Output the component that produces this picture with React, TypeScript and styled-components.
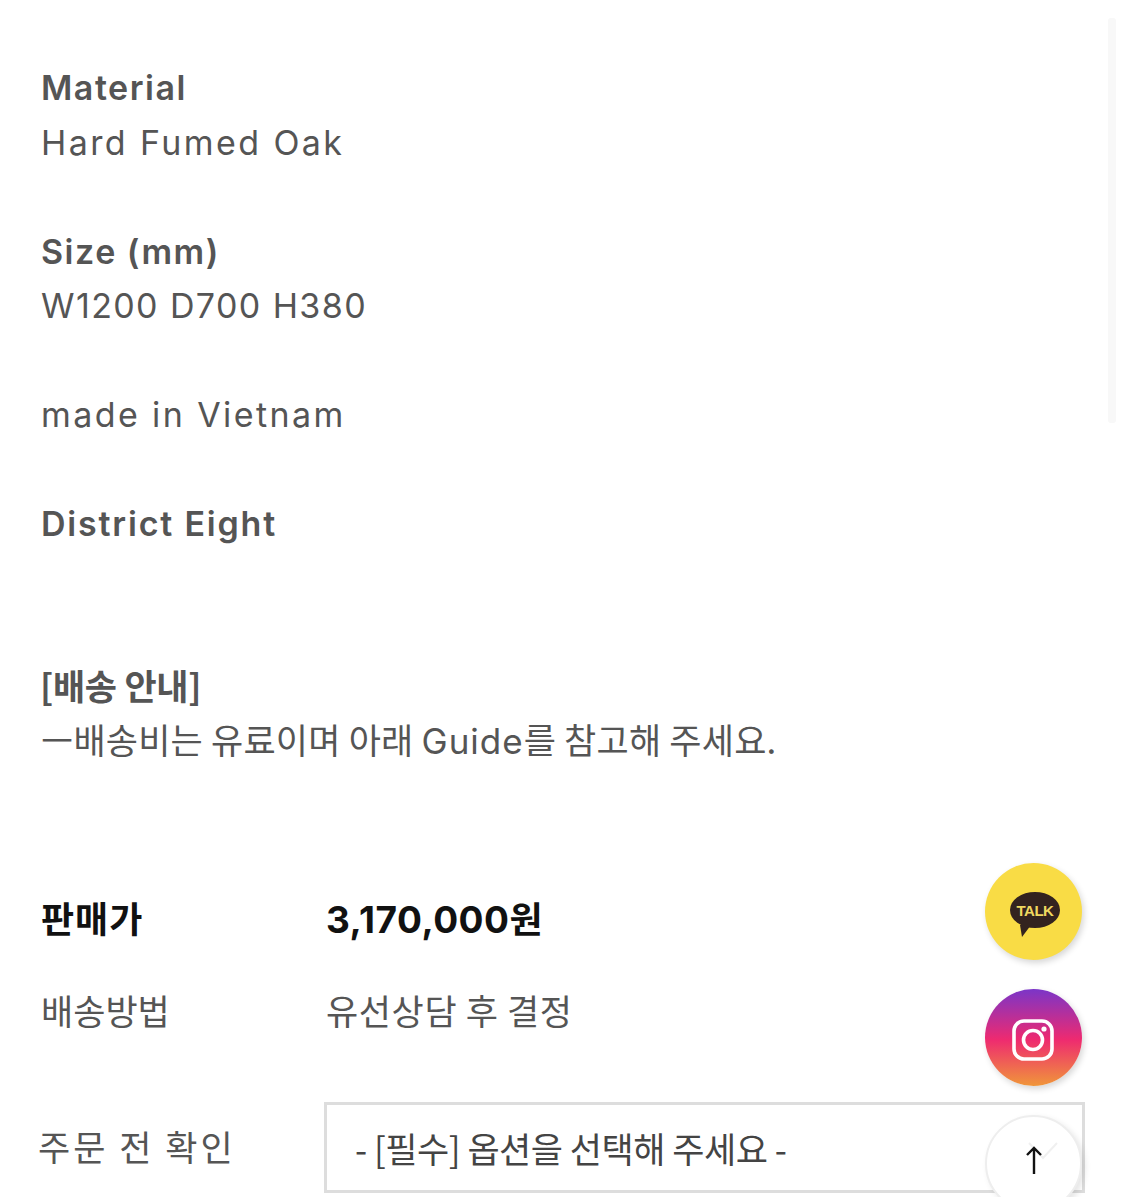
import styled, { createGlobalStyle } from "styled-components";

const Global = createGlobalStyle`
  html, body {
    margin: 0;
    padding: 0;
    background: #fff;
  }
`;

const latin = `Inter, "Noto Sans CJK KR", sans-serif`;
const korean = `"Noto Sans CJK KR", sans-serif`;

const Page = styled.div`
  position: relative;
  width: 1125px;
  height: 1197px;
  overflow: hidden;
  background: #fff;
  box-sizing: border-box;
  padding-top: 61px;
`;

const Scrollbar = styled.div`
  position: absolute;
  top: 18px;
  right: 9px;
  width: 8px;
  height: 405px;
  border-radius: 3px;
  background: #f8f8f8;
`;

const Description = styled.div`
  padding-left: 41px;
  font-family: ${latin};
  font-size: 34px;
  line-height: 54.5px;
  color: #555;
`;

const Line = styled.div<{ $bold?: boolean; $gap?: number; $track?: number }>`
  font-weight: ${(p) => (p.$bold ? 600 : 400)};
  margin-top: ${(p) => (p.$gap || 0) * 54.5}px;
  letter-spacing: ${(p) => p.$track ?? 0}px;
  white-space: nowrap;
`;

const NoticeTitle = styled(Line)`
  font-family: ${korean};
  font-weight: 700;
  font-size: 35px;
  margin-top: 106px;
  margin-left: -1px;
  letter-spacing: -0.3px;
`;

const NoticeText = styled(Line)`
  font-size: 35px;
  font-family: ${korean};
  letter-spacing: 0.2px;
  font-weight: 400;
  span {
    font-family: ${latin};
    letter-spacing: 1px;
  }
`;

const Info = styled.div`
  margin-top: 103px;
  padding-left: 41px;
  font-family: ${korean};
  color: #555;
  font-size: 35px;
`;

const Row = styled.div<{ $height: number }>`
  display: grid;
  grid-template-columns: 285px 1fr;
  align-items: center;
  height: ${(p) => p.$height}px;
  white-space: nowrap;
`;

const Label = styled.div<{ $strong?: boolean; $shift?: number; $track?: number; $lift?: number }>`
  margin-left: ${(p) => p.$shift || 0}px;
  margin-bottom: ${(p) => p.$lift || 0}px;
  font-weight: ${(p) => (p.$strong ? 700 : 400)};
  font-size: ${(p) => (p.$strong ? 36 : 35)}px;
  color: ${(p) => (p.$strong ? "#111" : "#555")};
  letter-spacing: ${(p) => p.$track ?? 0}px;
`;

const Value = styled.div`
  letter-spacing: 0.6px;
`;

const Price = styled.div`
  font-family: ${latin};
  font-weight: 700;
  color: #111;
  font-size: 37px;
  letter-spacing: 0.5px;
  span {
    font-family: ${korean};
    font-size: 36px;
  }
`;

const Select = styled.div`
  box-sizing: border-box;
  margin-left: -2px;
  width: 761px;
  height: 91px;
  border: 3px solid #ddd;
  display: flex;
  align-items: center;
  padding-left: 28px;
  font-size: 35px;
  color: #444;
  letter-spacing: -0.5px;
`;

const Floating = styled.div`
  position: absolute;
  top: 863px;
  left: 985px;
  display: flex;
  flex-direction: column;
  gap: 29px;
`;

const Round = styled.div<{ $bg: string }>`
  width: 97px;
  height: 97px;
  border-radius: 50%;
  display: flex;
  align-items: center;
  justify-content: center;
  background: ${(p) => p.$bg};
  box-shadow: 2px 3px 6px rgba(0, 0, 0, 0.16);
`;

const Bubble = styled.div`
  position: relative;
  width: 50px;
  height: 36px;
  margin-bottom: 3px;
  margin-left: 3px;
  background: #33231f;
  border-radius: 50%;
  display: flex;
  align-items: center;
  justify-content: center;
  font-family: "Liberation Sans", sans-serif;
  font-size: 15px;
  font-weight: 700;
  letter-spacing: -0.5px;
  color: #f0d860;

  &::after {
    content: "";
    position: absolute;
    left: 10px;
    bottom: -9px;
    width: 0;
    height: 0;
    border-left: 2px solid transparent;
    border-right: 9px solid transparent;
    border-top: 12px solid #33231f;
  }
`;

const TopButton = styled(Round)`
  box-sizing: border-box;
  border: 2px solid #eee;
  position: relative;
  box-shadow: 3px 3px 6px rgba(0, 0, 0, 0.1);
`;

const Arrow = styled.svg`
  position: relative;
  margin-bottom: 6px;
`;

const Chevron = styled.svg`
  position: absolute;
  top: 25px;
  left: 41px;
`;

const InstaIcon = styled.svg`
  margin-left: -1px;
  margin-top: 4px;
`;

export default function App() {
  return (
    <Page>
      <Global />
      <Scrollbar />
      <Description>
        <Line $bold $track={1.5}>Material</Line>
        <Line $track={2.4}>Hard Fumed Oak</Line>
        <Line $bold $gap={1} $track={1.5}>Size (mm)</Line>
        <Line $track={1.4}>W1200 D700 H380</Line>
        <Line $gap={1} $track={2.4}>made in Vietnam</Line>
        <Line $bold $gap={1} $track={1.8}>District Eight</Line>
        <NoticeTitle>[배송 안내]</NoticeTitle>
        <NoticeText>ㅡ배송비는 유료이며 아래 <span>Guide</span>를 참고해 주세요.</NoticeText>
      </Description>
      <Info>
        <Row $height={91}>
          <Label $strong $track={1}>판매가</Label>
          <Price>3,170,000<span>원</span></Price>
        </Row>
        <Row $height={93}>
          <Label>배송방법</Label>
          <Value>유선상담 후 결정</Value>
        </Row>
        <Row $height={183}>
          <Label $shift={-3} $track={3} $lift={3}>주문 전 확인</Label>
          <Select>- [필수] 옵션을 선택해 주세요 -</Select>
        </Row>
      </Info>
      <Floating>
        <Round $bg="#f9dc45">
          <Bubble>TALK</Bubble>
        </Round>
        <Round $bg="linear-gradient(180deg, #7b35c8 0%, #ee2a70 52%, #f0963a 100%)">
          <InstaIcon width="42" height="42" viewBox="0 0 42 42" fill="none" stroke="#fff" strokeWidth="3.6">
            <rect x="2" y="2" width="38" height="38" rx="10" />
            <circle cx="21" cy="21" r="9.5" />
            <circle cx="32" cy="10" r="2.6" fill="#fff" stroke="none" />
          </InstaIcon>
        </Round>
        <TopButton $bg="#fff">
          <Chevron width="30" height="18" viewBox="0 0 30 18" fill="none" stroke="#f0f0f0" strokeWidth="2">
            <path d="M1 1l14 15L29 1" />
          </Chevron>
          <Arrow width="18" height="29" viewBox="0 0 18 29" fill="none" stroke="#111" strokeWidth="2.4">
            <path d="M9 28V2M2 9l7-7 7 7" />
          </Arrow>
        </TopButton>
      </Floating>
    </Page>
  );
}
